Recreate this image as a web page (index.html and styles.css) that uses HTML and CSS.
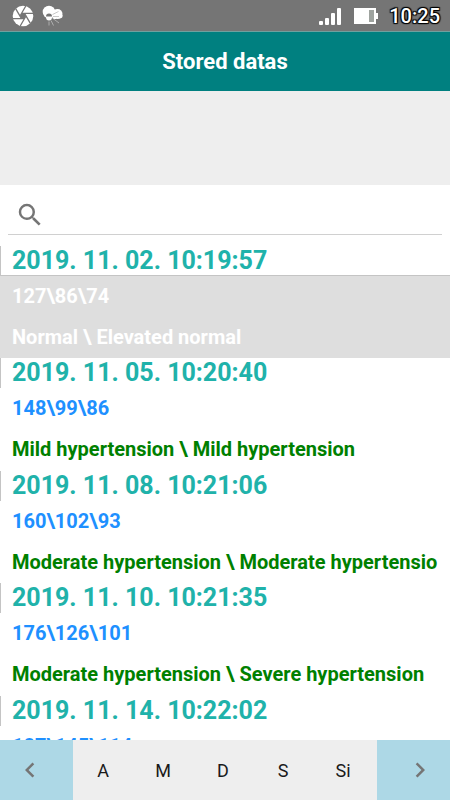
FILE: index.html
```
<!DOCTYPE html>
<html lang="en">
  <head>
    <meta charset="UTF-8" />
    <meta name="viewport" content="width=device-width, initial-scale=1.0" />
    <title>Stored datas</title>
    <link rel="stylesheet" href="styles.css">
  </head>
  <body>
    <!-- Status bar -->
    <div class="status">
      <svg class="shutter" width="22" height="22" viewBox="0 0 22 22">
        <circle cx="11" cy="11" r="10.300" fill="#fff" />
        <path d="M14 11 12.500 8.400h-3L8 11l1.500 2.600h3z" fill="#757575" />
        <path d="M9.500 8.400H21M12.500 8.400l6 10.300M14 11 8.200 21M12.500 13.600H1M9.500 13.600 3.500 3.300M8 11l5.800-10" stroke="#757575" stroke-width="1.300" />
      </svg>
      <svg class="weather" width="22" height="22" viewBox="0 0 22 22">
        <circle cx="7" cy="7" r="6.300" fill="#fff" />
        <circle cx="15.500" cy="9" r="5" fill="#fff" />
        <path d="M8 6h6v8h-3z" fill="#fff" />
        <path d="M14 10h6.500a3 3 0 0 1-2.500 3.500h-5z" fill="#fff" />
        <path d="M4 11.500a3 3 0 0 1 6 0z" fill="#757575" />
        <path d="M4 12a3 3.500 0 0 0 6 0z" fill="#fff" />
        <path d="M10.500 9.500l6-3M11 11.500h6" stroke="#bbb" stroke-width=".8" />
        <path d="M7 16.500v4M9 15.500l2.500 5M11 13.500l6 4.500" stroke="#bbb" stroke-width=".8" />
      </svg>
      <svg class="signal" width="22" height="20" viewBox="0 0 22 20" fill="#fff">
        <rect x="0" y="15" width="4" height="4" rx="1" />
        <rect x="6" y="12" width="4" height="7" rx="1" />
        <rect x="12" y="7" width="4" height="12" rx="1" />
        <rect x="18" y="2" width="4" height="17" rx="1" />
      </svg>
      <svg class="battery" width="25" height="18" viewBox="0 0 25 18">
        <path d="M0 1h22v5h2v6h-2v5H0z" fill="#fff" />
        <rect x="15" y="3" width="5" height="12" fill="#9ea39f" />
      </svg>
      <span class="clock">10:25</span>
    </div>

    <header class="header">
      <h1>Stored datas</h1>
    </header>
    <div class="spacer"></div>

    <main class="content">
      <label class="search">
        <svg width="30" height="30" viewBox="0 0 24 24" fill="#757575">
          <path d="M15.500 14h-.79l-.28-.27A6.470 6.470 0 0 0 16 9.500 6.500 6.500 0 1 0 9.500 16c1.610 0 3.090-.59 4.230-1.570l.27.28v.79l5 4.990L20.490 19l-4.990-5zm-6 0C7.010 14 5 11.990 5 9.500S7.010 5 9.500 5 14 7.010 14 9.500 11.990 14 9.500 14z" />
        </svg>
        <input type="text" aria-label="Search">
      </label>

      <!-- Measurements -->
      <ul class="records">
        <li>
          <h2>2019. 11. 02. 10:19:57</h2>
          <div class="record selected">
            <p class="values">127\86\74</p>
            <p class="result">Normal \ Elevated normal</p>
          </div>
        </li>
        <li>
          <h2>2019. 11. 05. 10:20:40</h2>
          <div class="record">
            <p class="values">148\99\86</p>
            <p class="result">Mild hypertension \ Mild hypertension</p>
          </div>
        </li>
        <li>
          <h2>2019. 11. 08. 10:21:06</h2>
          <div class="record">
            <p class="values">160\102\93</p>
            <p class="result">Moderate hypertension \ Moderate hypertensio</p>
          </div>
        </li>
        <li>
          <h2>2019. 11. 10. 10:21:35</h2>
          <div class="record">
            <p class="values">176\126\101</p>
            <p class="result">Moderate hypertension \ Severe hypertension</p>
          </div>
        </li>
        <li>
          <h2>2019. 11. 14. 10:22:02</h2>
          <div class="record">
            <p class="values">187\145\114</p>
          </div>
        </li>
      </ul>
    </main>

    <nav class="footer">
      <button class="arrow prev" aria-label="Previous">
        <svg width="30" height="30" viewBox="0 0 24 24" fill="#757575">
          <path d="M15.410 7.410 14 6l-6 6 6 6 1.410-1.410L10.830 12z" />
        </svg>
      </button>
      <div class="filters">
        <button>A</button>
        <button>M</button>
        <button>D</button>
        <button>S</button>
        <button>Si</button>
      </div>
      <button class="arrow next" aria-label="Next">
        <svg width="30" height="30" viewBox="0 0 24 24" fill="#757575">
          <path d="M10 6 8.590 7.410 13.170 12l-4.580 4.590L10 18l6-6z" />
        </svg>
      </button>
    </nav>
  </body>
</html>
```
FILE: styles.css
```
* {
  box-sizing: border-box;
}

body {
  margin: 0;
  height: 100vh;
  display: flex;
  flex-direction: column;
  overflow: hidden;
  font-family: Roboto, sans-serif;
  background: #fff;
}

h1,
h2,
p,
ul {
  margin: 0;
  padding: 0;
}

button {
  border: none;
  padding: 0;
  background: none;
  font-family: inherit;
  cursor: pointer;
}

.status {
  flex: none;
  display: flex;
  align-items: center;
  height: 32px;
  padding: 0 10px 0 12px;
  background: #757575;
  border-bottom: 1px solid #6fa09f;
}

.weather {
  margin-left: 8px;
}

.signal {
  margin-left: auto;
  margin-right: 13px;
}

.clock {
  margin-left: 10px;
  font-size: 20px;
  font-weight: 500;
  color: #fff;
  text-shadow: 1px 1px 1px #000, -1px -1px 1px #000, 1px -1px 1px #000, -1px 1px 1px #000;
}

.header {
  flex: none;
  display: flex;
  align-items: center;
  justify-content: center;
  height: 59px;
  background: #008080;
}

.header h1 {
  font-size: 22px;
  color: #fff;
}

.spacer {
  flex: none;
  height: 94px;
  background: #eee;
}

.content {
  flex: 1;
  min-height: 0;
  overflow: hidden;
}

.search {
  display: flex;
  align-items: center;
  height: 50px;
  margin: 0 8px 11px;
  padding: 10px 7px 0;
  border-bottom: 1px solid #d0d0d0;
}

.search input {
  flex: 1;
  min-width: 0;
  margin-left: 8px;
  border: none;
  outline: none;
  background: none;
  font-family: inherit;
  font-size: 20px;
}

.records {
  list-style: none;
}

.records li:nth-child(even) {
  padding-bottom: 1px;
}

.records h2 {
  height: 30px;
  padding-left: 11px;
  border-left: 1px solid #c4c4c4;
  font-size: 25px;
  line-height: 30px;
  color: #20b2aa;
}

.record {
  padding-left: 12px;
  font-size: 20px;
  font-weight: bold;
  line-height: 41px;
  white-space: nowrap;
}

.values {
  color: #1e90ff;
}

.result {
  color: #008000;
}

.selected {
  background: #dedede;
  box-shadow: 0 -1px #c4c4c4;
}

.selected p {
  color: #fff;
}

.footer {
  flex: none;
  display: flex;
  height: 60px;
  background: #eee;
}

.arrow {
  flex: none;
  display: flex;
  align-items: center;
  width: 73px;
  padding: 0 15px;
  background: #add8e6;
}

.next {
  justify-content: flex-end;
}

.filters {
  flex: 1;
  display: grid;
  grid-template-columns: repeat(5, 1fr);
  padding-right: 4px;
}

.filters button {
  font-size: 18px;
  color: #1a1a1a;
}
```
